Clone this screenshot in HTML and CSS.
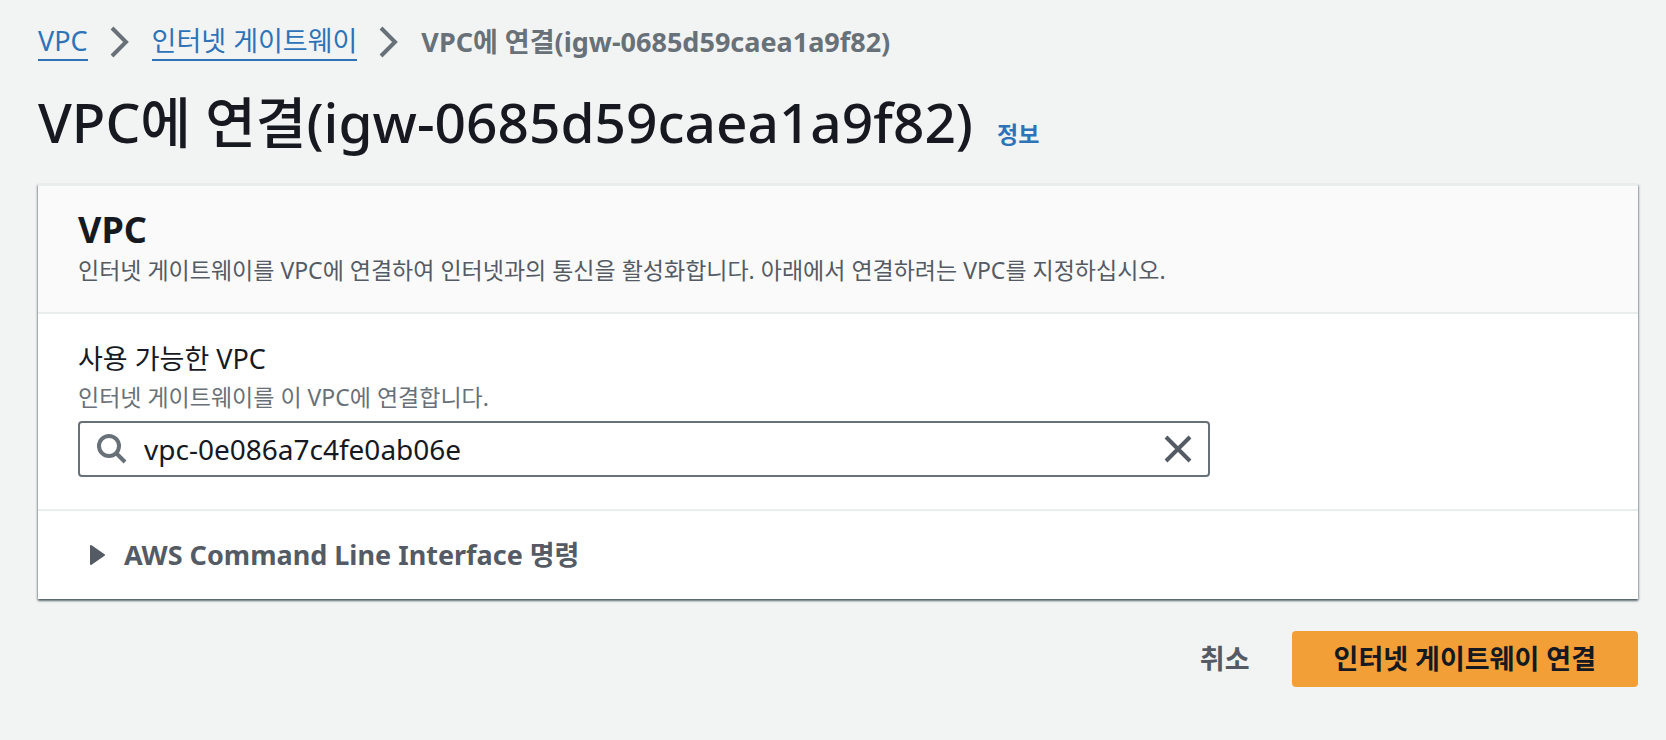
FILE: index.html
```html
<!DOCTYPE html>
<html lang="ko">
<head>
<meta charset="utf-8">
<meta name="viewport" content="width=device-width, initial-scale=1">
<title>VPC에 연결</title>
<link rel="stylesheet" href="styles.css">
</head>
<body>
<main class="page">
  <nav class="breadcrumbs" aria-label="탐색 경로">
    <a class="crumb" href="#vpc">VPC</a>
    <svg class="chevron" viewBox="0 0 20 32" aria-hidden="true"><path d="M2 2 16 16 2 30"/></svg>
    <a class="crumb" href="#gateways">인터넷 게이트웨이</a>
    <svg class="chevron" viewBox="0 0 20 32" aria-hidden="true"><path d="M2 2 16 16 2 30"/></svg>
    <span class="crumb-current" aria-current="page">VPC에 연결(igw-0685d59caea1a9f82)</span>
  </nav>
  <header class="title-row">
    <h1 class="title">VPC에 연결(igw-0685d59caea1a9f82)</h1>
    <a class="info" href="#info">정보</a>
  </header>
  <form class="form">
    <section class="card">
      <header class="card-header">
        <h2 class="card-title">VPC</h2>
        <p class="description">인터넷 게이트웨이를 VPC에 연결하여 인터넷과의 통신을 활성화합니다. 아래에서 연결하려는 VPC를 지정하십시오.</p>
      </header>
      <div class="card-body">
        <label class="label" for="vpc-id">사용 가능한 VPC</label>
        <p class="hint" id="vpc-hint">인터넷 게이트웨이를 이 VPC에 연결합니다.</p>
        <div class="search">
          <svg class="search-icon" viewBox="0 0 32 32" aria-hidden="true"><circle cx="13" cy="13" r="10"/><path d="M20 20 29 29"/></svg>
          <input class="search-input" id="vpc-id" type="text" value="vpc-0e086a7c4fe0ab06e" aria-describedby="vpc-hint">
          <button class="clear" type="button" aria-label="지우기"><svg class="clear-icon" viewBox="0 0 28 28" aria-hidden="true"><path d="M2 2 26 26M26 2 2 26"/></svg></button>
        </div>
      </div>
      <div class="card-footer">
        <button class="expander" type="button" aria-expanded="false">
          <svg class="caret" viewBox="0 0 16 20" aria-hidden="true"><path d="M1 1V19L14 10Z"/></svg>
          <span>AWS Command Line Interface 명령</span>
        </button>
      </div>
    </section>
    <div class="actions">
      <button class="button" type="button">취소</button>
      <button class="button button-primary" type="submit">인터넷 게이트웨이 연결</button>
    </div>
  </form>
</main>
</body>
</html>
```

FILE: styles.css
```css
* {
  box-sizing: border-box;
}

body {
  margin: 0;
  background: #f2f4f4;
  color: #16191f;
  font-family: "Noto Sans", "Noto Sans CJK KR", sans-serif;
  font-size: 27px;
  line-height: 40px;
}

h1, h2, p {
  margin: 0;
}

button, input {
  font: inherit;
  color: inherit;
}

button {
  border: 0;
  padding: 0;
  background: none;
  cursor: pointer;
}

.page {
  padding: 22px 28px 40px 38px;
}

.breadcrumbs {
  display: flex;
  align-items: center;
  gap: 22px;
}

.crumb {
  border-bottom: 2px solid #2e73b8;
  color: #2e73b8;
  line-height: 36px;
  text-decoration: none;
}

.chevron {
  width: 20px;
  height: 32px;
  fill: none;
  stroke: #687078;
  stroke-width: 4;
}

.crumb-current {
  color: #687078;
  font-weight: 700;
}

.title-row {
  display: flex;
  align-items: baseline;
  gap: 24px;
  margin-top: 22px;
}

.title {
  font-size: 55px;
  font-weight: 500;
  line-height: 76px;
}

.info {
  color: #2e73b8;
  font-size: 23px;
  font-weight: 700;
  text-decoration: none;
}

.card {
  margin-top: 24px;
  border-top: 2px solid #eaeded;
  background: #fff;
  box-shadow: 0 2px 2px #001c2480, 1px 1px 2px #001c2440, -1px 1px 2px #001c2440;
}

.card-header {
  padding: 22px 40px 24px;
  border-bottom: 2px solid #eaeded;
  background: #fafafa;
}

.card-title {
  font-size: 36px;
  font-weight: 700;
  line-height: 44px;
}

.description {
  color: #545b64;
  font-size: 23px;
  line-height: 36px;
}

.card-body {
  padding: 25px 40px 32px;
}

.label {
  display: block;
}

.hint {
  margin-bottom: 6px;
  color: #687078;
  font-size: 23px;
  line-height: 36px;
}

.search {
  display: flex;
  align-items: center;
  gap: 16px;
  width: calc(75% - 8px);
  height: 56px;
  padding: 0 16px;
  border: 2px solid #687078;
  border-radius: 4px;
}

.search-icon {
  width: 32px;
  height: 32px;
  fill: none;
  stroke: #687078;
  stroke-width: 4;
}

.search-input {
  flex: 1;
  min-width: 0;
  padding: 0;
  border: 0;
  outline: 0;
  background: none;
  font-size: 28px;
}

.clear {
  display: flex;
}

.clear-icon {
  width: 28px;
  height: 28px;
  fill: none;
  stroke: #545b64;
  stroke-width: 4;
}

.card-footer {
  padding: 24px 52px;
  border-top: 2px solid #eaeded;
}

.expander {
  display: flex;
  align-items: center;
  gap: 18px;
  color: #545b64;
  font-weight: 700;
}

.caret {
  width: 16px;
  height: 20px;
  fill: #545b64;
  stroke: #545b64;
  stroke-width: 2;
  stroke-linejoin: round;
}

.actions {
  display: flex;
  justify-content: flex-end;
  margin-top: 32px;
}

.button {
  padding: 8px 42px;
  border-radius: 4px;
  color: #545b64;
  font-weight: 700;
}

.button-primary {
  background: #f29f38;
  color: #16191f;
}
```
